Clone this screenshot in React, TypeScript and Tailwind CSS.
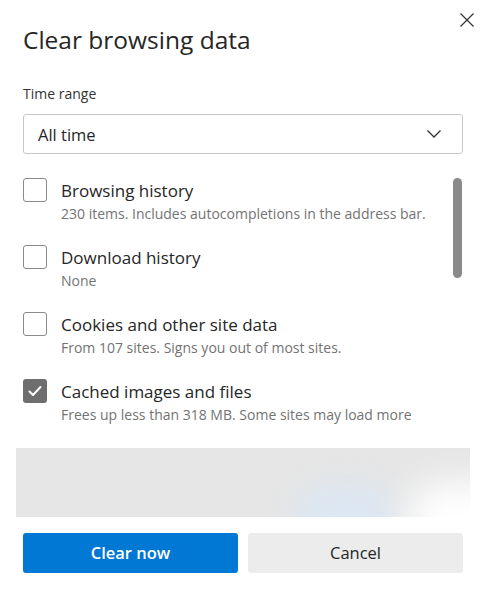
import React from "react";

const font = { fontFamily: '"Open Sans", "Noto Sans", "Liberation Sans", sans-serif' };

type Item = { title: string; desc: string; checked: boolean };

const items: Item[] = [
  { title: "Browsing history", desc: "230 items. Includes autocompletions in the address bar.", checked: false },
  { title: "Download history", desc: "None", checked: false },
  { title: "Cookies and other site data", desc: "From 107 sites. Signs you out of most sites.", checked: false },
  { title: "Cached images and files", desc: "Frees up less than 318 MB. Some sites may load more", checked: true },
];

function Box({ checked }: { checked: boolean }) {
  if (checked) {
    return (
      <div className="w-[24px] h-[24px] shrink-0 rounded-[3px] bg-[#6e6e6e] flex items-center justify-center">
        <svg width="16" height="16" viewBox="0 0 16 16" fill="none">
          <path d="M2.5 8.5 L6 12 L13.5 4" stroke="white" strokeWidth="2" strokeLinecap="round" strokeLinejoin="round" />
        </svg>
      </div>
    );
  }
  return <div className="w-[24px] h-[24px] shrink-0 rounded-[3px] border border-[#8a8a8a] bg-white" />;
}

export default function App() {
  return (
    <div className="w-[489px] h-[597px] bg-white relative overflow-hidden text-[#262626]" style={font}>
      <button className="absolute right-[14px] top-[12px] w-[16px] h-[16px] flex items-center justify-center">
        <svg width="16" height="16" viewBox="0 0 16 16">
          <path d="M1.5 1.5 L14.5 14.5 M14.5 1.5 L1.5 14.5" stroke="#333" strokeWidth="1.2" />
        </svg>
      </button>
      <div className="pl-[23px] pr-[26px] pt-[24px]">
        <h1 className="text-[24.5px] leading-[32px] font-normal text-[#262626]">Clear browsing data</h1>
        <div className="mt-[28px] text-[14px] leading-[20px] text-[#333]">Time range</div>
        <div className="mt-[10px] h-[40px] border border-[#c8c8c8] rounded-[3px] flex items-center justify-between pl-[14px] pr-[20px]">
          <span className="text-[16.5px] text-[#262626] pt-[3px]">All time</span>
          <svg width="16" height="10" viewBox="0 0 16 10">
            <path d="M1.5 1.5 L8 8 L14.5 1.5" stroke="#333" strokeWidth="1.3" fill="none" />
          </svg>
        </div>
      </div>
      <div className="relative mt-[24px] h-[270px]">
        <div className="flex flex-col gap-[20px] px-[23px]">
          {items.map((it) => (
            <div key={it.title} className="flex gap-[14px]">
              <Box checked={it.checked} />
              <div className="flex flex-col">
                <span className="text-[17px] leading-[25px] text-[#262626]">{it.title}</span>
                <span className="text-[14px] leading-[22px] text-[#737373]">{it.desc}</span>
              </div>
            </div>
          ))}
        </div>
        <div className="absolute left-[453px] top-[0px] w-[9px] h-[100px] rounded-full bg-[#8a8a8a]" />
      </div>
      <div className="mx-[16px] w-[454px] h-[69px] bg-[#e6e6e6] relative overflow-hidden">
        <div className="absolute left-[280px] top-[38px] w-[100px] h-[60px] rounded-full bg-[#dbe7f3] blur-[14px]" />
        <div className="absolute left-[390px] top-[34px] w-[120px] h-[80px] rounded-full bg-white blur-[18px]" />
      </div>
      <div className="flex gap-[10px] pl-[23px] pr-[26px] mt-[16px]">
        <button className="flex-1 h-[40px] rounded-[3px] bg-[#0078d4] text-white text-[16.5px] font-semibold">Clear now</button>
        <button className="flex-1 h-[40px] rounded-[3px] bg-[#ececec] text-[#262626] text-[16.5px]">Cancel</button>
      </div>
    </div>
  );
}
